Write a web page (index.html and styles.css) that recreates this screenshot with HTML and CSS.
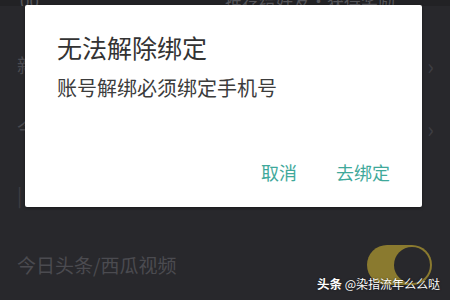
FILE: index.html
```html
<!DOCTYPE html>
<html lang="zh">
<head>
<meta charset="utf-8">
<link rel="stylesheet" href="styles.css">
</head>
<body>
<div class="screen">
  <div class="top-row">
    <span class="top-left">00</span>
    <span class="top-right">推荐给好友·获得奖励</span>
  </div>
  <div class="row r1"><span class="label">新消息通知</span><span class="chev">›</span></div>
  <div class="row r2"><span class="label">今日头条</span><span class="chev">›</span></div>
  <div class="row r3"><span class="label">|</span></div>
  <div class="row r4">
    <span class="label">今日头条/西瓜视频</span>
    <span class="toggle"><span class="knob"></span></span>
  </div>

  <div class="dialog">
    <div class="title">无法解除绑定</div>
    <div class="message">账号解绑必须绑定手机号</div>
    <div class="actions">
      <span class="btn">取消</span>
      <span class="btn">去绑定</span>
    </div>
  </div>

  <div class="watermark"><b>头条</b> @染指流年么么哒</div>
</div>
</body>
</html>
```

FILE: styles.css
```css
* { box-sizing: border-box; }
html, body { margin: 0; padding: 0; }
body {
  width: 450px;
  height: 300px;
  overflow: hidden;
  background: #28282c;
  font-family: "Noto Sans CJK SC", "Noto Sans", sans-serif;
}
.screen {
  position: relative;
  width: 450px;
  height: 300px;
  background: #28282c;
  display: flex;
  flex-direction: column;
}
.top-row {
  height: 6px;
  overflow: hidden;
  display: flex;
  justify-content: space-between;
  align-items: flex-end;
  padding: 0 55px 0 20px;
  background: #222225;
  color: #55555a;
  font-size: 17px;
  line-height: 10px;
}
.row {
  display: flex;
  align-items: center;
  justify-content: space-between;
  padding: 0 16px 0 17px;
  color: #4b4b50;
  font-size: 19px;
  height: 26px;
  line-height: 26px;
}
.r1 { margin-top: 46px; }
.r2 { margin-top: 37px; }
.r3 { margin-top: 41px; color: #3e3e43; }
.r4 { height: 44px; margin-top: 35px; padding-right: 18px; }
.chev { color: #3e3e43; font-size: 22px; }
.toggle {
  width: 65px;
  height: 40px;
  border-radius: 20px;
  background: #8a7a2f;
  display: flex;
  align-items: center;
  justify-content: flex-end;
  padding-right: 2px;
}
.knob {
  width: 36px;
  height: 36px;
  border-radius: 50%;
  background: #28282c;
}
.dialog {
  position: absolute;
  left: 25px;
  top: 5px;
  width: 397px;
  height: 202px;
  background: #ffffff;
  border-radius: 2px;
  padding: 27px 32px 0 32px;
  display: flex;
  flex-direction: column;
  box-shadow: 0 1px 3px rgba(0,0,0,0.4);
}
.title {
  font-size: 25px;
  line-height: 30px;
  color: #333333;
}
.message {
  margin-top: 12px;
  font-size: 20px;
  line-height: 28px;
  color: #3c3c3c;
}
.actions {
  margin-top: auto;
  margin-bottom: 23px;
  display: flex;
  justify-content: flex-end;
  gap: 39px;
}
.btn {
  font-size: 18px;
  line-height: 24px;
  color: #3fa99b;
}
.watermark {
  position: absolute;
  right: 10px;
  bottom: 8px;
  color: #ffffff;
  font-size: 12px;
  line-height: 16px;
  text-shadow: 0 0 2px rgba(0,0,0,0.6);
}
.watermark b { font-weight: 700; font-size: 12.5px; }
```
